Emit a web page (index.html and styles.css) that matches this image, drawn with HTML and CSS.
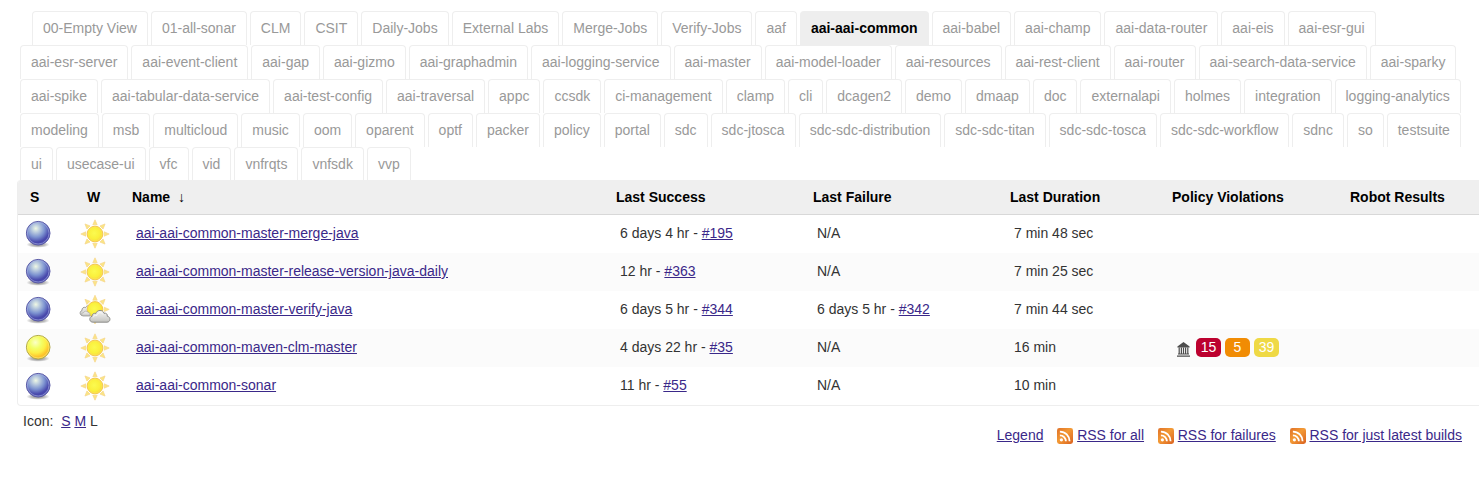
FILE: index.html
```html
<!DOCTYPE html>
<html lang="en">
<head>
<meta charset="utf-8">
<title>aai-aai-common</title>
<link rel="stylesheet" href="styles.css">
</head>
<body>
<svg class="defs" width="0" height="0" aria-hidden="true">
  <defs>
    <radialGradient id="gBlue" cx=".4" cy=".3" r=".68">
      <stop offset="0" stop-color="#f0f8e4"/><stop offset=".2" stop-color="#c4d4e0"/><stop offset=".55" stop-color="#7c92d0"/><stop offset=".85" stop-color="#4848ac"/><stop offset="1" stop-color="#4a4aac"/>
    </radialGradient>
    <radialGradient id="gYellow" cx=".38" cy=".3" r=".72">
      <stop offset="0" stop-color="#fcffc8"/><stop offset=".35" stop-color="#f2ff68"/><stop offset=".62" stop-color="#fdee45"/><stop offset=".85" stop-color="#fdc32c"/><stop offset="1" stop-color="#f6c030"/>
    </radialGradient>
    <radialGradient id="gShadow"><stop offset="0" stop-color="#000" stop-opacity=".5"/><stop offset=".6" stop-color="#000" stop-opacity=".25"/><stop offset="1" stop-color="#000" stop-opacity="0"/></radialGradient>
    <radialGradient id="gSun" cx=".45" cy=".45" r=".6"><stop offset="0" stop-color="#fbfa50"/><stop offset=".6" stop-color="#faf03c"/><stop offset="1" stop-color="#f8d23c"/></radialGradient>
    <linearGradient id="gCloud" x1="0" y1="0" x2="0" y2="1"><stop offset="0" stop-color="#f2f2f0"/><stop offset=".5" stop-color="#dededc"/><stop offset="1" stop-color="#c2c2be"/></linearGradient>
    <linearGradient id="gRss" x1="0" y1="0" x2="1" y2="1"><stop offset="0" stop-color="#df7028"/><stop offset=".45" stop-color="#f39a35"/><stop offset="1" stop-color="#d9601f"/></linearGradient>
  </defs>
  <symbol id="blue" viewBox="0 0 32 32">
    <ellipse cx="16" cy="26.6" rx="11.6" ry="3.2" fill="url(#gShadow)"/>
    <circle cx="16.2" cy="15.2" r="11.8" fill="url(#gBlue)" stroke="#5a5aa6"/>
    <circle cx="16.2" cy="15.2" r="10.8" fill="none" stroke="#a9b4e4" stroke-opacity=".65" stroke-width=".9"/>
  </symbol>
  <symbol id="yellow" viewBox="0 0 32 32">
    <ellipse cx="16" cy="26.6" rx="11.6" ry="3.2" fill="url(#gShadow)"/>
    <circle cx="16.2" cy="15.2" r="11.8" fill="url(#gYellow)" stroke="#b0aa4c"/>
    <circle cx="16.2" cy="15.2" r="10.8" fill="none" stroke="#fff48a" stroke-opacity=".55" stroke-width=".9"/>
  </symbol>
  <symbol id="sun" viewBox="0 0 32 32">
    <g fill="#fbe584" stroke="#f6d68c" stroke-width=".7">
      <path id="rays" d="M13.8 6.8 16 1.8 18.2 6.8ZM13.8 25.2 16 30.2 18.2 25.2ZM6.8 13.8 1.8 16 6.8 18.2ZM25.2 13.8 30.2 16 25.2 18.2Z"/>
      <use href="#rays" transform="rotate(45 16 16)"/>
    </g>
    <circle cx="16" cy="16" r="7.8" fill="url(#gSun)" stroke="#f4c850" stroke-width="1"/>
    <circle cx="16" cy="16" r="6.9" fill="none" stroke="#fbe660" stroke-opacity=".7" stroke-width=".8"/>
  </symbol>
  <symbol id="partly" viewBox="0 0 32 32">
    <path d="M4 21.8C.6 21.8.2 17.4 3 16.5 2.4 14.2 5 12.6 6.6 13.6 7.6 11 11 11.4 11.6 13.6L12.5 21.8Z" fill="url(#gCloud)" stroke="#92928e" stroke-width=".9"/>
    <g fill="#fbe584" stroke="#f6d68c" stroke-width=".7"><path d="M13.8 6.2 16 1.2 18.2 6.2ZM25.2 13.2 30.2 15.4 25.2 17.6ZM13.8 25 16 30 18.2 25Z"/><path transform="rotate(45 16 15.4)" d="M13.8 6.2 16 1.2 18.2 6.2ZM6.8 13.2 1.8 15.4 6.8 17.6Z"/></g>
    <circle cx="16" cy="15.4" r="7.8" fill="url(#gSun)" stroke="#f4c850"/>
    <path d="M4 21.8C2 21 2.4 18.8 4.6 18.6 5.2 17 8 16.6 9 18.2 10.6 18.2 11.4 19.6 10.8 21.8Z" fill="url(#gCloud)" stroke="#a0a09c" stroke-width=".6"/>
    <path d="M13.8 28.2C10 28 9.8 23 13 22.4 12.8 20 15 18.8 16.8 19.6 17.8 15.6 24.2 15.2 25 19.3 27.2 18.6 28.8 20.4 28.2 22.2 32 22.8 31.8 28 28 28.2Z" fill="url(#gCloud)" stroke="#858581" stroke-width=".9"/>
    <path d="M14.2 23.4C14.8 21.4 16.4 21 18 21.4 18.8 18 22.6 17.8 23.8 20.4" fill="none" stroke="#fff" stroke-opacity=".8" stroke-width=".8"/>
  </symbol>
  <symbol id="rss" viewBox="0 0 16 16">
    <rect width="16" height="16" rx="2.4" fill="url(#gRss)"/>
    <circle cx="4.4" cy="11.8" r="1.6" fill="#fff"/>
    <path d="M2.9 7.3A6 6 0 0 1 8.9 13.3M2.9 3.6A9.7 9.7 0 0 1 12.6 13.3" fill="none" stroke="#fff" stroke-width="1.8"/>
  </symbol>
  <symbol id="bank" viewBox="0 0 13 15">
    <path d="M6.5 0 12.6 4.4V5.6H.4V4.4ZM1 11.6H12V12.5H1ZM0 13.6H13V14.8H0Z" fill="#4d4d4d"/>
    <path d="M2.2 5.5V12M4.4 5.5V12M6.5 5.5V12M8.6 5.5V12M10.8 5.5V12" stroke="#4d4d4d" stroke-width="1.2"/>
  </symbol>
</svg>

<nav class="tabs">
  <div class="tab-row first"><a class="tab">00-Empty View</a><a class="tab">01-all-sonar</a><a class="tab">CLM</a><a class="tab">CSIT</a><a class="tab">Daily-Jobs</a><a class="tab">External Labs</a><a class="tab">Merge-Jobs</a><a class="tab">Verify-Jobs</a><a class="tab">aaf</a><a class="tab active">aai-aai-common</a><a class="tab">aai-babel</a><a class="tab">aai-champ</a><a class="tab">aai-data-router</a><a class="tab">aai-eis</a><a class="tab">aai-esr-gui</a></div>
  <div class="tab-row"><a class="tab">aai-esr-server</a><a class="tab">aai-event-client</a><a class="tab">aai-gap</a><a class="tab">aai-gizmo</a><a class="tab">aai-graphadmin</a><a class="tab">aai-logging-service</a><a class="tab">aai-master</a><a class="tab">aai-model-loader</a><a class="tab">aai-resources</a><a class="tab">aai-rest-client</a><a class="tab">aai-router</a><a class="tab">aai-search-data-service</a><a class="tab">aai-sparky</a></div>
  <div class="tab-row"><a class="tab">aai-spike</a><a class="tab">aai-tabular-data-service</a><a class="tab">aai-test-config</a><a class="tab">aai-traversal</a><a class="tab">appc</a><a class="tab">ccsdk</a><a class="tab">ci-management</a><a class="tab">clamp</a><a class="tab">cli</a><a class="tab">dcagen2</a><a class="tab">demo</a><a class="tab">dmaap</a><a class="tab">doc</a><a class="tab">externalapi</a><a class="tab">holmes</a><a class="tab">integration</a><a class="tab">logging-analytics</a></div>
  <div class="tab-row"><a class="tab">modeling</a><a class="tab">msb</a><a class="tab">multicloud</a><a class="tab">music</a><a class="tab">oom</a><a class="tab">oparent</a><a class="tab">optf</a><a class="tab">packer</a><a class="tab">policy</a><a class="tab">portal</a><a class="tab">sdc</a><a class="tab">sdc-jtosca</a><a class="tab">sdc-sdc-distribution</a><a class="tab">sdc-sdc-titan</a><a class="tab">sdc-sdc-tosca</a><a class="tab">sdc-sdc-workflow</a><a class="tab">sdnc</a><a class="tab">so</a><a class="tab">testsuite</a></div>
  <div class="tab-row"><a class="tab">ui</a><a class="tab">usecase-ui</a><a class="tab">vfc</a><a class="tab">vid</a><a class="tab">vnfrqts</a><a class="tab">vnfsdk</a><a class="tab">vvp</a></div>
</nav>

<main class="jobs">
  <div class="row head"><span class="s">S</span><span class="w">W</span><span>Name &nbsp;↓</span><span>Last Success</span><span>Last Failure</span><span>Last Duration</span><span>Policy Violations</span><span>Robot Results</span></div>
  <div class="row"><svg class="icon"><use href="#blue"/></svg><svg class="icon"><use href="#sun"/></svg><span><a href="#">aai-aai-common-master-merge-java</a></span><span>6 days 4 hr - <a href="#">#195</a></span><span>N/A</span><span>7 min 48 sec</span></div>
  <div class="row alt"><svg class="icon"><use href="#blue"/></svg><svg class="icon"><use href="#sun"/></svg><span><a href="#">aai-aai-common-master-release-version-java-daily</a></span><span>12 hr - <a href="#">#363</a></span><span>N/A</span><span>7 min 25 sec</span></div>
  <div class="row"><svg class="icon"><use href="#blue"/></svg><svg class="icon"><use href="#partly"/></svg><span><a href="#">aai-aai-common-master-verify-java</a></span><span>6 days 5 hr - <a href="#">#344</a></span><span>6 days 5 hr - <a href="#">#342</a></span><span>7 min 44 sec</span></div>
  <div class="row alt"><svg class="icon"><use href="#yellow"/></svg><svg class="icon"><use href="#sun"/></svg><span><a href="#">aai-aai-common-maven-clm-master</a></span><span>4 days 22 hr - <a href="#">#35</a></span><span>N/A</span><span>16 min</span><span class="policy"><svg class="bank"><use href="#bank"/></svg><b class="badge critical">15</b><b class="badge severe">5</b><b class="badge moderate">39</b></span></div>
  <div class="row"><svg class="icon"><use href="#blue"/></svg><svg class="icon"><use href="#sun"/></svg><span><a href="#">aai-aai-common-sonar</a></span><span>11 hr - <a href="#">#55</a></span><span>N/A</span><span>10 min</span></div>
</main>

<footer class="foot">
  <div class="sizes">Icon: &nbsp;<a href="#">S</a> <a href="#">M</a> L</div>
  <div class="feeds"><a href="#">Legend</a><span class="feed"><svg><use href="#rss"/></svg><a href="#">RSS for all</a></span><span class="feed"><svg><use href="#rss"/></svg><a href="#">RSS for failures</a></span><span class="feed"><svg><use href="#rss"/></svg><a href="#">RSS for just latest builds</a></span></div>
</footer>
</body>
</html>
```
FILE: styles.css
```css
* { box-sizing: border-box; }
body {
  margin: 0;
  overflow: hidden;
  background: #fff;
  color: #333;
  font: 14px/20px "Liberation Sans", Arial, sans-serif;
}
a[href] { color: #3a2889; text-decoration: underline; }
.defs { display: block; }
.tabs { padding: 11px 0 0 20px; height: 180px; }
.tab-row { display: flex; gap: 3px; height: 34px; white-space: nowrap; }
.tab-row.first { margin-left: 12px; }
.tab {
  flex: none;
  height: 34px;
  padding: 6px 10px 0;
  border: 1px solid #eee;
  border-bottom: 0;
  border-radius: 4px 4px 0 0;
  color: #999;
}
.tab.active { background: #eee; color: #000; font-weight: bold; }
.jobs {
  position: relative;
  width: 1480px;
  margin-left: 17px;
  border: 1px solid #eee;
  border-top: 0;
  border-radius: 4px 0 0 4px;
  overflow: hidden;
  background: #fff;
}
.row {
  display: grid;
  grid-template-columns: 57px 53px 484px 197px 197px 162px 178px 1fr;
  align-items: center;
  height: 38px;
}
.row > span { padding-left: 8px; padding-bottom: 2px; white-space: nowrap; }
.row.alt { background: #fbfbfb; }
.row.head {
  height: 35px;
  background: #efefef;
  border-bottom: 1px solid #d8d8d8;
  color: #000;
  font-weight: bold;
}
.row.head > span { padding-left: 4px; padding-bottom: 1px; }
.row.head > .s { padding-left: 12px; }
.row.head > .w { padding-left: 12px; }
.icon { width: 32px; height: 32px; margin-left: 4px; }
.row > .policy { display: flex; align-items: center; gap: 4px; }
.bank { width: 13px; height: 15px; margin: 4px 2px 0 1px; }
.badge {
  width: 25px;
  height: 19px;
  border-radius: 5px;
  color: #fff;
  font-weight: normal;
  line-height: 19px;
  text-align: center;
}
.critical { background: #bc012f; }
.severe { background: #f18c04; }
.moderate { background: #efd945; }
.foot { display: flex; justify-content: space-between; padding: 5px 17px 0 23px; }
.feeds { display: flex; gap: 14px; padding-top: 14px; }
.feed { display: flex; gap: 3.7px; }
.feed svg { width: 16px; height: 16px; margin-top: 3px; }
```
